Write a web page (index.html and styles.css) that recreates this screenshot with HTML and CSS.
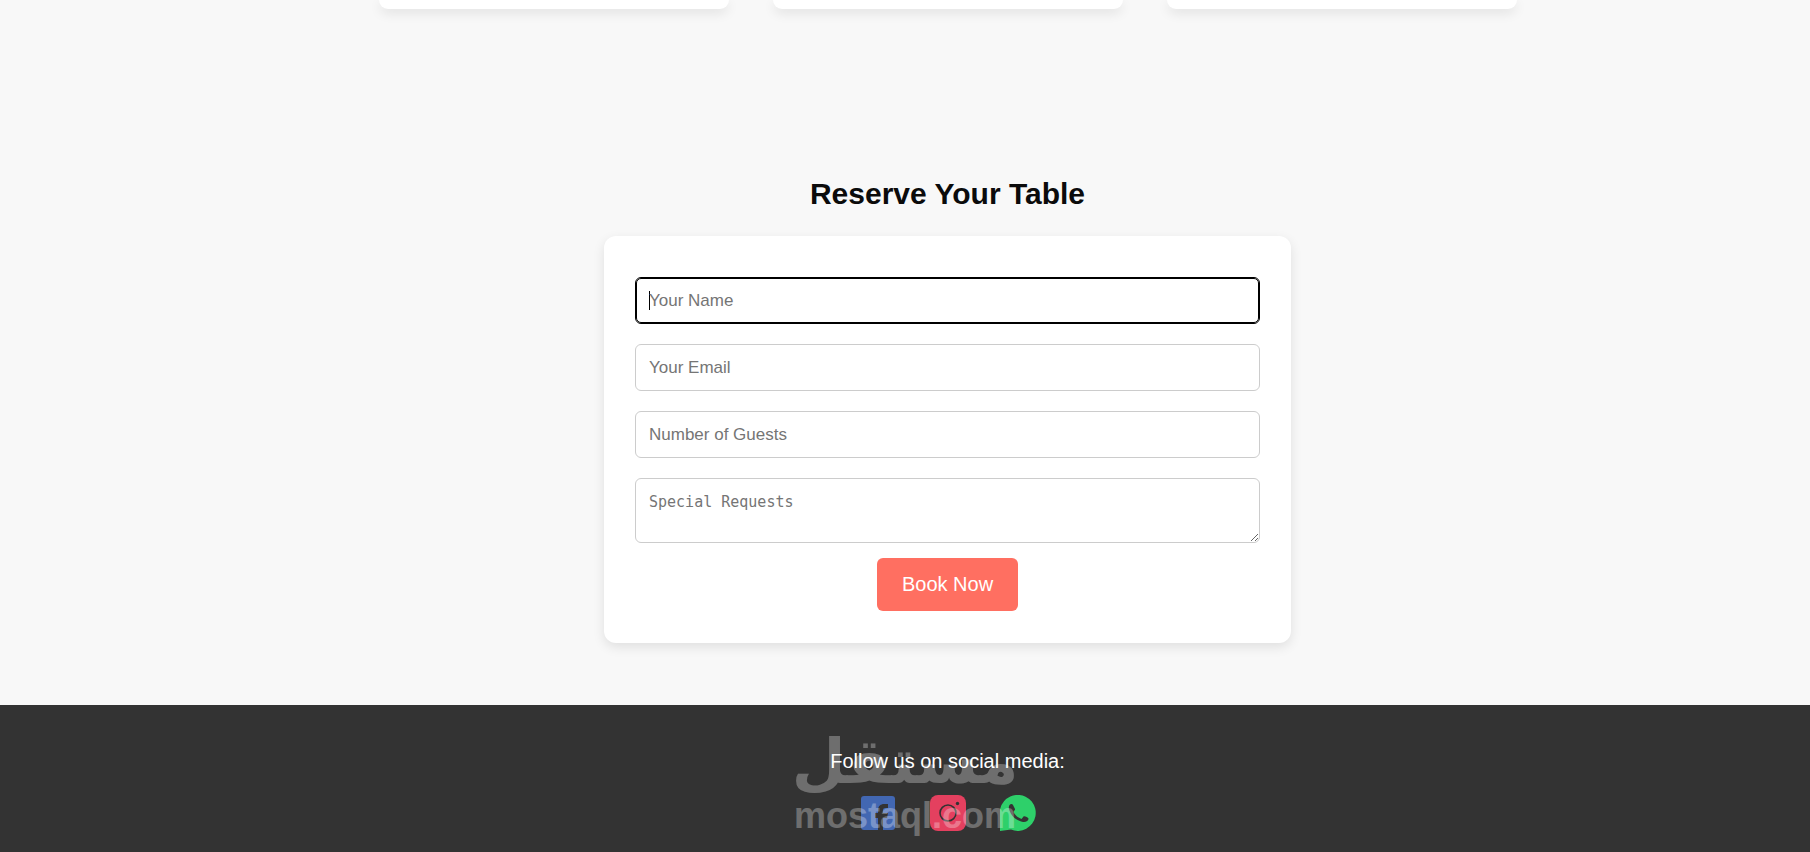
FILE: index.html
```html
<!DOCTYPE html>
<html lang="en">
<head>
<meta charset="utf-8">
<title>Reserve Your Table</title>
<link rel="stylesheet" href="styles.css">
</head>
<body>
<main class="page">
  <section class="cards" aria-label="Menu">
    <article class="card"></article>
    <article class="card"></article>
    <article class="card"></article>
  </section>
  <section class="reserve">
    <h2 class="title">Reserve Your Table</h2>
    <form class="form">
      <input class="field" type="text" placeholder="Your Name" aria-label="Your Name" autofocus>
      <input class="field" type="email" placeholder="Your Email" aria-label="Your Email">
      <input class="field" type="number" placeholder="Number of Guests" aria-label="Number of Guests">
      <textarea class="field area" rows="2" placeholder="Special Requests" aria-label="Special Requests"></textarea>
      <button class="book" type="submit">Book Now</button>
    </form>
  </section>
</main>
<footer class="footer">
  <p class="follow">Follow us on social media:</p>
  <nav class="social" aria-label="Social media">
    <a href="#" aria-label="Facebook">
      <svg class="icon" viewBox="0 0 36 36"><rect x="1" y="1" width="34" height="34" rx="3" fill="#4267b2"/><path fill="#333" d="M18 35V23h-3v-5h3v-3c0-4 3-6 6-6h4v4h-2c-3 0-3 1-3 3v2h5l-1 5h-4v12z"/></svg>
    </a>
    <a href="#" aria-label="Instagram">
      <svg class="icon" viewBox="0 0 36 36"><rect width="36" height="36" rx="8" fill="#e4405f"/><circle cx="18" cy="18" r="8" fill="none" stroke="#333" stroke-width="1.6"/><circle cx="27.5" cy="8.5" r="1.7" fill="#333"/></svg>
    </a>
    <a href="#" aria-label="WhatsApp">
      <svg class="icon" viewBox="0 0 36 36"><path fill="#2ed06a" d="M0 36V21A18 18 0 1 1 11 34.600z"/><path fill="#333" d="M9.500 10c1-1.500 3-1.500 3.500 0l2 4c.3 1-1 2-1.500 3 2 4 5 6 8 7l2-2.500c1-.8 4.500 1 5 2 .3 2-2.500 4-5.500 3.500C16 26 10.500 20 9 14c-.4-1.500-.2-3 .5-4z"/></svg>
    </a>
  </nav>
  <div class="watermark">
    <span class="wm-arabic" lang="ar" dir="rtl">مستقل</span>
    <span class="wm-latin">mostaql.com</span>
  </div>
</footer>
</body>
</html>
```
FILE: styles.css
```css
* { box-sizing: border-box; }
body {
  margin: 0;
  min-height: 100vh;
  display: flex;
  flex-direction: column;
  background: #f8f8f8;
  color: #0b0b0b;
  font-family: Arial, "Liberation Sans", sans-serif;
  overflow: hidden;
}
.page { padding-left: 85px; }
.cards { display: flex; justify-content: center; gap: 44px; }
.card {
  width: 350px;
  height: 9px;
  background: #fff;
  border-radius: 0 0 12px 12px;
  box-shadow: 0 4px 12px rgba(0, 0, 0, .1);
}
.reserve {
  padding: 167px 20px 62px;
  display: flex;
  flex-direction: column;
  align-items: center;
}
.title { margin: 0 0 24px; font-size: 30px; line-height: 36px; }
.form {
  width: 100%;
  max-width: 687px;
  padding: 41px 31px 32px;
  display: flex;
  flex-direction: column;
  gap: 20px;
  background: #fff;
  border-radius: 12px;
  box-shadow: 0 4px 12px rgba(0, 0, 0, .1);
}
.field {
  display: block;
  width: 100%;
  height: 47px;
  margin: 0;
  padding: 12px 13px;
  border: 1px solid #ccc;
  border-radius: 6px;
  font-family: inherit;
  font-size: 17px;
  background: #fff;
}
.field::placeholder { color: #757575; }
/* Solid, non-blinking caret while the field is empty */
.field:focus { border-color: #000; outline: 1px solid #000; outline-offset: -2px; }
.field:focus:placeholder-shown {
  caret-color: transparent;
  background: linear-gradient(#000, #000) 13px center / 1px 19px no-repeat #fff;
}
.area {
  height: 65px;
  margin-bottom: -5px;
  padding-top: 14px;
  font-family: Consolas, "DejaVu Sans Mono", monospace;
  font-size: 15px;
  resize: vertical;
}
.book {
  align-self: center;
  padding: 15px 25px;
  border: 0;
  border-radius: 6px;
  background: #ff6f61;
  color: #fff;
  font-family: inherit;
  font-size: 20px;
  line-height: 23px;
}
.footer {
  position: relative;
  flex: 1;
  padding: 42px 0 20px 85px;
  background: #333;
  color: #fff;
  text-align: center;
}
.follow { margin: 0 0 20px; font-size: 20px; line-height: 28px; }
.social { display: flex; justify-content: center; gap: 34px; }
.icon { display: block; width: 36px; height: 36px; }
.watermark {
  position: absolute;
  top: 24px;
  left: 50%;
  transform: translateX(-50%);
  display: flex;
  flex-direction: column;
  align-items: center;
  color: #fff;
  opacity: .29;
  font-weight: bold;
  pointer-events: none;
}
.wm-arabic { font-family: "DejaVu Sans", sans-serif; font-size: 62px; line-height: 66px; }
.wm-latin { font-size: 36px; line-height: 42px; }
```
